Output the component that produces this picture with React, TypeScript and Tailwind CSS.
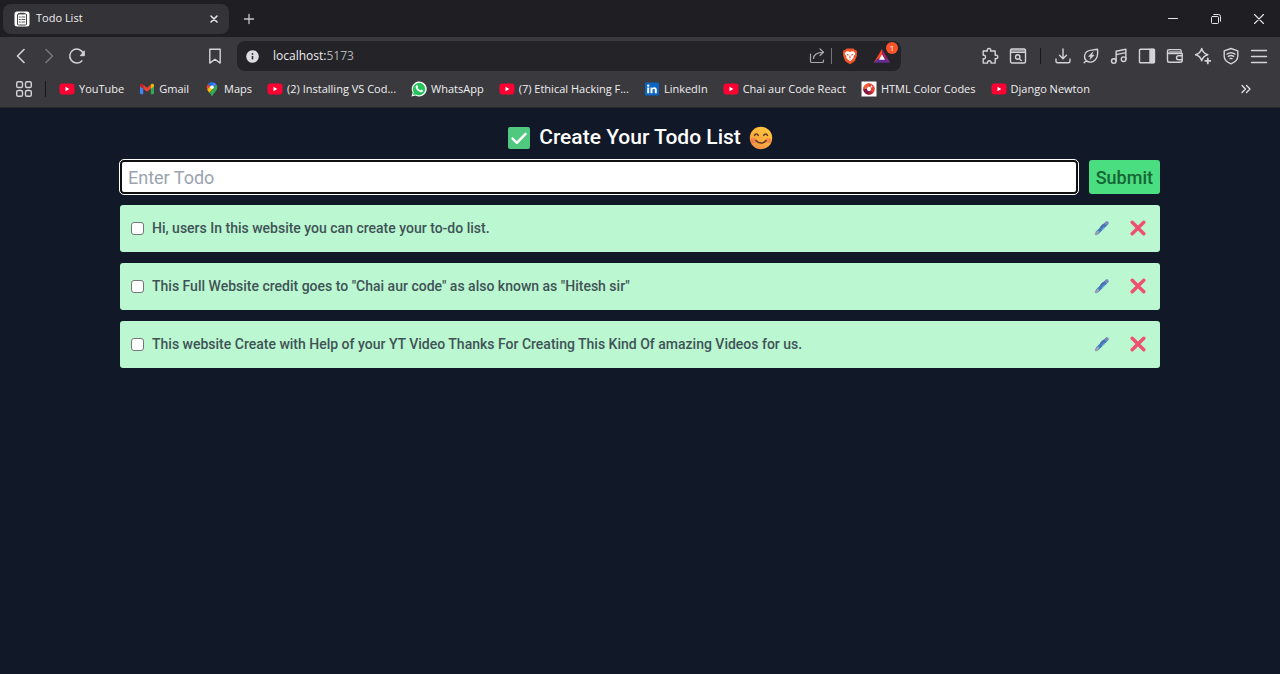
import { useState } from "react";
import type { ReactNode } from "react";

function Svg({ size = 18, box = 18, sw = 1.4, children }: { size?: number; box?: number; sw?: number; children: ReactNode }) {
  return (
    <svg
      width={size}
      height={size}
      viewBox={`0 0 ${box} ${box}`}
      fill="none"
      stroke="currentColor"
      strokeWidth={sw}
      strokeLinecap="round"
      strokeLinejoin="round"
      aria-hidden="true"
      className="shrink-0"
    >
      {children}
    </svg>
  );
}

const YouTubeIcon = () => (
  <Svg size={16} box={16}>
    <rect x="0.5" y="2.5" width="15" height="11" rx="3" fill="#ff0033" stroke="none" />
    <path d="M6.5 5.8v4.4L10.3 8z" fill="#fff" stroke="none" />
  </Svg>
);

const GmailIcon = () => (
  <Svg size={16} box={16}>
    <g stroke="none">
      <path d="M1 4.6l3.2 2.4v6.2H2.1A1.1 1.1 0 0 1 1 12.1z" fill="#4285f4" />
      <path d="M15 4.6L11.8 7v6.2h2.1a1.1 1.1 0 0 0 1.1-1.1z" fill="#34a853" />
      <path d="M4.2 3.8L8 6.7l3.8-2.9V7.8L8 10.7 4.2 7.8z" fill="#ea4335" />
      <path d="M1 4.3c0-1.5 1.6-2 2.6-1.2l.6.5v4.2L1 5.5z" fill="#c5221f" />
      <path d="M15 4.3c0-1.5-1.6-2-2.6-1.2l-.6.5v4.2L15 5.5z" fill="#fbbc04" />
    </g>
  </Svg>
);

const MapsIcon = () => (
  <Svg size={16} box={16}>
    <g stroke="none">
      <path d="M8 1a5.300 5.300 0 0 0-4.100 2l2.500 2.200L10 1.400A5 5 0 0 0 8 1z" fill="#1a73e8" />
      <path d="M3.900 3a5.200 5.200 0 0 0-.7 5.500L6.400 5.200z" fill="#ea4335" />
      <path d="M10 1.400L6.800 5.200l2.600 2.200 3.100-3.800A5 5 0 0 0 10 1.400z" fill="#4285f4" />
      <path d="M3.200 8.500c.5 1.200 1.400 2.100 2.300 3.200l4.100-4.800-3-1.900z" fill="#fbbc04" />
      <path d="M12.500 3.600c1.300 2.400.8 4.500-.6 6.300C10.200 12 9 13 8.500 14.800c-.2.600-.8.600-1 0-.4-1.300-1.200-2.200-2-3.100z" fill="#34a853" />
      <circle cx="8" cy="6.200" r="1.800" fill="#fff" />
    </g>
  </Svg>
);

const WhatsAppIcon = () => (
  <Svg size={16} box={16}>
    <path d="M.5 15.500l1.100-4A7.500 7.500 0 1 1 4.500 14.500z" fill="#fff" stroke="none" />
    <path d="M1.900 14.100l.8-2.900a6.200 6.200 0 1 1 2.200 2.200z" fill="#25c45b" stroke="none" />
    <path
      d="M5.600 4.200c.4-.3.800-.1.900.2l.6 1.300c.1.400-.6.900-.5 1.100.6 1.200 1.500 2 2.700 2.500.3.100.8-.9 1.100-.8l1.400.7c.4.200.2 1.100-.2 1.500-.7.700-1.900.7-3.400-.1-1.700-.9-2.900-2.200-3.400-3.700-.4-1.200.1-2.200.8-2.700z"
      fill="#fff"
      stroke="none"
    />
  </Svg>
);

const LinkedInIcon = () => (
  <Svg size={16} box={16}>
    <g stroke="none">
      <rect x="1" y="1.500" width="14" height="13" rx="1" fill="#0a66c2" />
      <circle cx="4.200" cy="4.600" r="1.200" fill="#fff" />
      <path d="M3.200 6.500h2v5.800h-2zM6.500 6.500h1.900v.8c.4-.6 1.100-1 2-1 1.700 0 2.400 1.100 2.400 2.800v3.200h-2V9.400c0-.9-.3-1.400-1.100-1.400-.8 0-1.200.6-1.200 1.400v2.900h-2z" fill="#fff" />
    </g>
  </Svg>
);

const ColorCodesIcon = () => (
  <Svg size={16} box={16}>
    <rect x="0.500" y="0.500" width="15" height="15" fill="#fff" stroke="none" />
    <circle cx="8" cy="8" r="4" stroke="#e8402f" strokeWidth="3.600" />
    <path d="M4 8a4 4 0 0 0 1.200 2.800A4 4 0 0 0 8 12" stroke="#7b1a45" strokeWidth="3.600" strokeLinecap="butt" />
    <path d="M8 12a4 4 0 0 0 2.800-1.200" stroke="#b3243d" strokeWidth="3.600" strokeLinecap="butt" />
    <path d="M4 8a4 4 0 0 1 4-4" stroke="#f0623c" strokeWidth="3.600" strokeLinecap="butt" />
    <circle cx="10.500" cy="5.500" r="0.900" fill="#fff" stroke="none" />
  </Svg>
);

const TodoFavicon = () => (
  <Svg size={16} box={16}>
    <rect x="0.500" y="0.500" width="15" height="15" rx="2.500" fill="#fff" stroke="none" />
    <rect x="3.500" y="2.800" width="9" height="11.200" rx="1" stroke="#444" strokeWidth="1" />
    <path d="M6 2.500h4" stroke="#444" strokeWidth="1.600" />
    <path d="M5.300 6h1M7.800 6h3M5.300 8.500h1M7.800 8.500h3M5.300 11h1M7.800 11h3" stroke="#555" strokeWidth="1" />
  </Svg>
);

const BraveIcon = () => (
  <Svg size={18} box={18}>
    <path d="M5.600 1.500h6.800l1.500 1.600 1.500.2.900 2.400-.6 1.300.3 1.200-1.900 5.200c-.4.900-1.300 1.400-2.200 2L9 17.300l-2.900-1.900c-.9-.6-1.800-1.100-2.200-2L2 8.200 2.300 7l-.6-1.300.9-2.400 1.500-.2z" fill="#f1562b" stroke="none" />
    <path d="M5.200 4.500L7 4.200 9 5l2-.8 1.800.3 1.600 2.300-2 3 .3 1.300-1.900 1.700L9 14.300l-1.800-1.500-1.900-1.700.3-1.300-2-3z" fill="#fff" stroke="none" />
    <path d="M5.300 6.700l2.400.8-.5 1.700zM12.700 6.700l-2.400.8.5 1.700zM8.100 10.500L9 8.200l.9 2.300L9 11zM7.500 12.200l1.500-.8 1.500.8" fill="#f1562b" stroke="none" />
  </Svg>
);

const RewardsIcon = () => (
  <Svg size={18} box={18}>
    <path d="M9 2L.8 15.800 9 11.500z" fill="#ff4724" stroke="none" />
    <path d="M9 2l8.200 13.800L9 11z" fill="#9e1f63" stroke="none" />
    <path d="M.8 15.800h16.400L13 11.500H5z" fill="#662d91" stroke="none" />
    <path d="M9 7.600l3 5.200H6z" fill="#fff" stroke="none" />
  </Svg>
);

const toolIcons: { label: string; icon: ReactNode }[] = [
  {
    label: "Downloads",
    icon: (
      <Svg>
        <path d="M9 2v9.500M5.500 8.200L9 11.700l3.500-3.500M2 12v2.200c0 .9.600 1.500 1.500 1.500h11c.9 0 1.500-.6 1.500-1.500V12" />
      </Svg>
    ),
  },
  {
    label: "Energy saver",
    icon: (
      <Svg>
        <path d="M2.200 15.800l2-2.200M4.200 13.600C1.600 11 2 6.900 5 4.500 7.400 2.700 11.500 3.200 15.500 2.300c.5 4.300.1 8.100-2.400 10.700-2.600 2.700-6.400 2.800-8.900.6z" />
        <path d="M10.800 5L6.500 9.400h2.300l-.8 3 4.200-4.400H9.900z" fill="currentColor" strokeWidth="0.600" />
      </Svg>
    ),
  },
  {
    label: "Playlist",
    icon: (
      <Svg>
        <circle cx="3.800" cy="14" r="2.300" />
        <circle cx="13.600" cy="12.200" r="2.300" />
        <path d="M6.100 14V4.300l9.800-2v9.900M6.100 7.600l9.800-2" />
      </Svg>
    ),
  },
  {
    label: "Sidebar",
    icon: (
      <Svg>
        <rect x="1.500" y="2.200" width="15" height="13.600" rx="1" />
        <path d="M12 2.500h4.300v13H12z" fill="currentColor" />
      </Svg>
    ),
  },
  {
    label: "Wallet",
    icon: (
      <Svg>
        <path d="M15.200 6V4.200c0-1-.6-1.600-1.500-1.600H3.200C2.200 2.600 1.500 3.300 1.500 4.200v9.200c0 1 .8 1.800 1.800 1.800h10.900c1.100 0 2-.8 2-1.800V6.500H3.300c-1 0-1.800-.7-1.800-1.800" />
        <path d="M2.500 4h12v2H3.500z" fill="currentColor" fillOpacity="0.600" stroke="none" />
        <path d="M16.200 8.700h-3.700a2 2 0 0 0 0 4h3.700" />
      </Svg>
    ),
  },
  {
    label: "Leo AI",
    icon: (
      <Svg>
        <path d="M7.700 1.500c.9 3.700 2.300 5.200 6.200 6.200-3.900 1-5.300 2.500-6.200 6.200-.9-3.700-2.300-5.200-6.200-6.200 3.900-1 5.300-2.500 6.200-6.200z" />
        <path d="M13.800 11.400v5M11.300 13.900h5" strokeWidth="1.800" />
      </Svg>
    ),
  },
  {
    label: "VPN",
    icon: (
      <Svg>
        <path d="M9 1.500l6.800 2.300v5.400c0 3.600-2.900 6-6.800 7.600-3.900-1.600-6.800-4-6.800-7.600V3.800z" />
        <path d="M5 7.100c2.500-1.800 5.500-1.800 8 0M6.300 9.400c1.700-1.200 3.700-1.200 5.400 0M8 11.700c.7-.4 1.300-.4 2 0" />
      </Svg>
    ),
  },
  {
    label: "Menu",
    icon: (
      <Svg>
        <path d="M1.500 3.500h15M1.500 9.500h15M1.500 15.500h15" />
      </Svg>
    ),
  },
];

const bookmarks: { label: string; icon: ReactNode }[] = [
  { label: "YouTube", icon: <YouTubeIcon /> },
  { label: "Gmail", icon: <GmailIcon /> },
  { label: "Maps", icon: <MapsIcon /> },
  { label: "(2) Installing VS Cod...", icon: <YouTubeIcon /> },
  { label: "WhatsApp", icon: <WhatsAppIcon /> },
  { label: "(7) Ethical Hacking F...", icon: <YouTubeIcon /> },
  { label: "LinkedIn", icon: <LinkedInIcon /> },
  { label: "Chai aur Code React", icon: <YouTubeIcon /> },
  { label: "HTML Color Codes", icon: <ColorCodesIcon /> },
  { label: "Django Newton", icon: <YouTubeIcon /> },
];

function IconButton({ label, children, dim = false }: { label: string; children: ReactNode; dim?: boolean }) {
  return (
    <button
      type="button"
      aria-label={label}
      className={dim ? "flex size-7 shrink-0 items-center justify-center text-[#77767b]" : "flex size-7 shrink-0 items-center justify-center text-[#d4d3d8]"}
    >
      {children}
    </button>
  );
}

function TabStrip() {
  return (
    <div className="flex h-[37px] items-center bg-[#1f1e23] pl-[3px]">
      <div className="flex h-[30px] w-[226px] items-center gap-1.5 rounded-lg bg-[#343337] pr-[7px] pl-[11px]">
        <TodoFavicon />
        <span className="flex-1 text-[11px] text-[#f0f0f2]">Todo List</span>
        <button type="button" aria-label="Close tab" className="flex size-4 items-center justify-center text-[#e6e6e8]">
          <Svg size={10} box={10} sw={1.6}>
            <path d="M2 2l6 6M8 2l-6 6" />
          </Svg>
        </button>
      </div>
      <button type="button" aria-label="New tab" className="ml-2 flex size-6 items-center justify-center text-[#c6c5ca]">
        <Svg size={12} box={12} sw={1.3}>
          <path d="M6 1.500v9M1.500 6h9" />
        </Svg>
      </button>
      <div className="ml-auto flex text-[#e6e6e8]">
        <button type="button" aria-label="Minimize" className="flex h-8 w-[43px] items-center justify-center">
          <Svg size={10} box={10} sw={1}>
            <path d="M.5 4.500h9" />
          </Svg>
        </button>
        <button type="button" aria-label="Restore" className="flex h-8 w-[43px] items-center justify-center">
          <Svg size={10} box={10} sw={1}>
            <rect x="0.500" y="2.500" width="7" height="7" rx="1" />
            <path d="M2.800.5h4.700a2 2 0 0 1 2 2v4.700" />
          </Svg>
        </button>
        <button type="button" aria-label="Close window" className="flex h-8 w-[43px] items-center justify-center">
          <Svg size={10} box={10} sw={1.1}>
            <path d="M.5.5l9 9M9.500.5l-9 9" />
          </Svg>
        </button>
      </div>
    </div>
  );
}

function Toolbar() {
  return (
    <div className="flex items-center px-[7px] pt-1">
      <IconButton label="Back">
        <Svg sw={1.6}>
          <path d="M12 2.500L5.500 9l6.500 6.500" />
        </Svg>
      </IconButton>
      <IconButton label="Forward" dim>
        <Svg sw={1.6}>
          <path d="M6 2.500L12.500 9 6 15.500" />
        </Svg>
      </IconButton>
      <IconButton label="Reload">
        <Svg sw={1.5}>
          <path d="M13.800 13.900A7 7 0 1 1 15.300 6.500" />
          <path d="M16.300 4.200v4.500h-3.600z" fill="currentColor" strokeWidth="1" />
        </Svg>
      </IconButton>
      <div className="ml-[110px] flex">
        <IconButton label="Bookmark this page">
          <Svg>
            <path d="M3.800 2.200h10.400v13.900L9 12.300l-5.200 3.800z" />
          </Svg>
        </IconButton>
      </div>
      <div className="ml-2 flex h-[30px] min-w-0 flex-1 items-center rounded-lg bg-[#242328] pr-[5px] pl-[9px]">
        <Svg size={13} box={13}>
          <circle cx="6.500" cy="6.500" r="6.300" fill="#dddce1" stroke="none" />
          <path d="M6.500 6v3.400" stroke="#242328" strokeWidth="1.500" strokeLinecap="butt" />
          <circle cx="6.500" cy="3.900" r="0.900" fill="#242328" stroke="none" />
        </Svg>
        <div className="ml-3.5 min-w-0 flex-1 text-[12px] text-[#b4b3b8]">
          <span className="text-[#ececef]">localhost:</span>5173
        </div>
        <button type="button" aria-label="Share" className="flex size-5 items-center justify-center text-[#a9a8ad]">
          <Svg size={16} box={16} sw={1.2}>
            <path d="M1.500 6v7.200c0 .7.500 1.300 1.300 1.300h10.400c.8 0 1.300-.6 1.300-1.300V12" />
            <path d="M4.500 10.500c.3-3.800 3-6.200 9.500-6.200M11 1l3.500 3.300L11 7.500" />
          </Svg>
        </button>
        <span className="ml-1 h-4 w-px bg-[#75747a]" />
        <button type="button" aria-label="Brave Shields" className="ml-2 flex size-5 items-center justify-center">
          <BraveIcon />
        </button>
        <button type="button" aria-label="Brave Rewards, 1 new" className="relative ml-3 flex size-5 items-center justify-center">
          <RewardsIcon />
          <span className="absolute -top-1 -right-1.5 flex size-3 items-center justify-center rounded-full bg-[#fb542b] text-[8px] leading-none text-white">1</span>
        </button>
        <span className="w-1" />
      </div>
      <div className="ml-[75px] flex items-center">
        <IconButton label="Extensions">
          <Svg>
            <path d="M2.200 4h4.200C5.800 2.500 6.700 1.500 8 1.500s2.200 1 1.600 2.500h4.600v4.300c1.500-.6 2.600.3 2.600 1.600s-1.100 2.200-2.600 1.600v4.600H10c.5-1.400-.5-2.300-1.700-2.300s-2.200.9-1.700 2.300H2.200v-4.400c1.400.5 2.300-.5 2.300-1.700S3.600 7.800 2.200 8.300z" />
          </Svg>
        </IconButton>
        <IconButton label="Search tabs">
          <Svg>
            <rect x="1.500" y="2" width="15" height="14" rx="1.500" />
            <path d="M2 2.500h14v3H2z" fill="currentColor" fillOpacity="0.600" stroke="none" />
            <path d="M1.500 5.500h15" strokeWidth="1" />
            <circle cx="8.700" cy="10" r="2.200" />
            <path d="M10.400 11.700l1.900 1.800" />
          </Svg>
        </IconButton>
        <span className="mx-2 h-4 w-px bg-[#18171b]" />
        {toolIcons.map((t) => (
          <IconButton key={t.label} label={t.label}>
            {t.icon}
          </IconButton>
        ))}
      </div>
    </div>
  );
}

function BookmarksBar() {
  return (
    <nav aria-label="Bookmarks" className="flex h-9 items-center pr-7 pl-[15px] text-[11px] text-[#f0f0f2]">
      <button type="button" aria-label="All bookmarks" className="text-[#d4d3d8]">
        <Svg>
          <rect x="1.700" y="1.700" width="5.800" height="5.800" rx="1.600" />
          <rect x="10.500" y="1.700" width="5.800" height="5.800" rx="1.600" />
          <rect x="1.700" y="10.500" width="5.800" height="5.800" rx="1.600" />
          <rect x="10.500" y="10.500" width="5.800" height="5.800" rx="1.600" />
        </Svg>
      </button>
      <span className="ml-3 h-4 w-px bg-[#18171b]" />
      <div className="ml-[13px] flex min-w-0 flex-1 gap-[15px]">
        {bookmarks.map((b) => (
          <a key={b.label} href="#" className="flex shrink-0 items-center gap-1 whitespace-nowrap">
            {b.icon}
            {b.label}
          </a>
        ))}
      </div>
      <button type="button" aria-label="More bookmarks" className="text-[#e6e6e8]">
        <Svg size={12} box={12} sw={1.3}>
          <path d="M2 2.500L5.500 6 2 9.500M6.500 2.500L10 6l-3.500 3.500" />
        </Svg>
      </button>
    </nav>
  );
}

const CheckEmoji = () => (
  <Svg size={24} box={24}>
    <rect x="1" y="1" width="22" height="22" rx="2" fill="#50c880" stroke="none" />
    <path d="M5.500 12.500l4.300 4.300 8.800-9" stroke="#fff" strokeWidth="2.400" />
  </Svg>
);

const SmileEmoji = () => (
  <svg width="24" height="24" viewBox="0 0 24 24" fill="none" strokeLinecap="round" aria-hidden="true">
    <defs>
      <linearGradient id="face" x1="0.800" y1="0" x2="0.200" y2="1">
        <stop offset="0" stopColor="#ffc83d" />
        <stop offset="0.600" stopColor="#fbab3c" />
        <stop offset="1" stopColor="#f08a4b" />
      </linearGradient>
    </defs>
    <circle cx="12" cy="12" r="11.200" fill="url(#face)" />
    <ellipse cx="4.800" cy="14.500" rx="3" ry="2.600" fill="#f4694e" opacity="0.600" />
    <ellipse cx="19.200" cy="14.500" rx="3" ry="2.600" fill="#f4694e" opacity="0.600" />
    <path d="M5.500 9.500c.8-2 3-2 3.800 0M14.700 9.500c.8-2 3-2 3.800 0M7 14.500c2.500 3.400 7.500 3.400 10 0" stroke="#5a3b2b" strokeWidth="1.500" />
  </svg>
);

const PenIcon = () => (
  <Svg size={16} box={16}>
    <path d="M3.500 12.500L12.500 3.500" stroke="#3d7dbf" strokeWidth="3.600" />
    <path d="M9.300 4.400L6.800 7" stroke="#5b5f9e" strokeWidth="1.200" />
    <path d="M8.300 9.700l2-2" stroke="#7ba6d6" strokeWidth="1.200" />
    <path d="M2 14l2-2" stroke="#9c9db5" strokeWidth="2.600" />
    <path d="M12.600 3.400l.4-.4" stroke="#8485b8" strokeWidth="3.400" />
  </Svg>
);

const CrossIcon = () => (
  <Svg size={16} box={16}>
    <path d="M2.200 2.200l11.600 11.600M13.800 2.200L2.200 13.800" stroke="#f0506e" strokeWidth="3.400" />
  </Svg>
);

const todos = [
  "Hi, users In this website you can create your to-do list.",
  'This Full Website credit goes to "Chai aur code" as also known as "Hitesh sir"',
  "This website Create with Help of your YT Video Thanks For Creating This Kind Of amazing Videos for us.",
];

function TodoRow({ text }: { text: string }) {
  const [done, setDone] = useState(false);
  return (
    <li className="flex h-[47px] items-center rounded-[3px] bg-[#bbf7d0] pr-3 pb-px pl-[11px]">
      <label className="flex flex-1 items-center gap-2 text-[14px] font-medium text-[#3f5357]">
        <input
          type="checkbox"
          checked={done}
          onChange={() => setDone(!done)}
          className="size-[13px] appearance-none rounded-[3px] border border-[#767676] bg-white checked:bg-[#0075ff]"
        />
        {text}
      </label>
      <button type="button" aria-label="Edit todo" className="flex size-5 items-center justify-center">
        <PenIcon />
      </button>
      <button type="button" aria-label="Delete todo" className="ml-4 flex size-5 items-center justify-center">
        <CrossIcon />
      </button>
    </li>
  );
}

export default function App() {
  return (
    <div className="flex min-h-screen flex-col bg-[#111827] font-['Open_Sans',sans-serif]">
      <header className="border-b border-[#27272b] bg-[#3a393d]">
        <TabStrip />
        <Toolbar />
        <BookmarksBar />
      </header>
      <main className="w-full px-[120px] pt-3 font-[Roboto,sans-serif]">
        <h1 className="flex h-8 items-center justify-center gap-2 pt-1 text-[21px] font-medium text-white">
          <CheckEmoji />
          Create Your Todo List
          <SmileEmoji />
        </h1>
        <form className="mt-2 flex gap-[11px]" onSubmit={(e) => e.preventDefault()}>
          <input
            type="text"
            aria-label="Enter Todo"
            placeholder="Enter Todo"
            className="h-[34px] min-w-0 flex-1 rounded-[4px] border-2 border-[#101010] bg-white px-1.5 text-[18px] text-gray-800 outline outline-white placeholder:text-[#9ca3af]"
          />
          <button type="submit" className="h-[34px] rounded-[3px] bg-[#4ade80] px-[7px] text-[18px] font-medium text-[#166534]">
            Submit
          </button>
        </form>
        <ul className="mt-[11px] flex flex-col gap-[11px]">
          {todos.map((t) => (
            <TodoRow key={t} text={t} />
          ))}
        </ul>
      </main>
    </div>
  );
}
